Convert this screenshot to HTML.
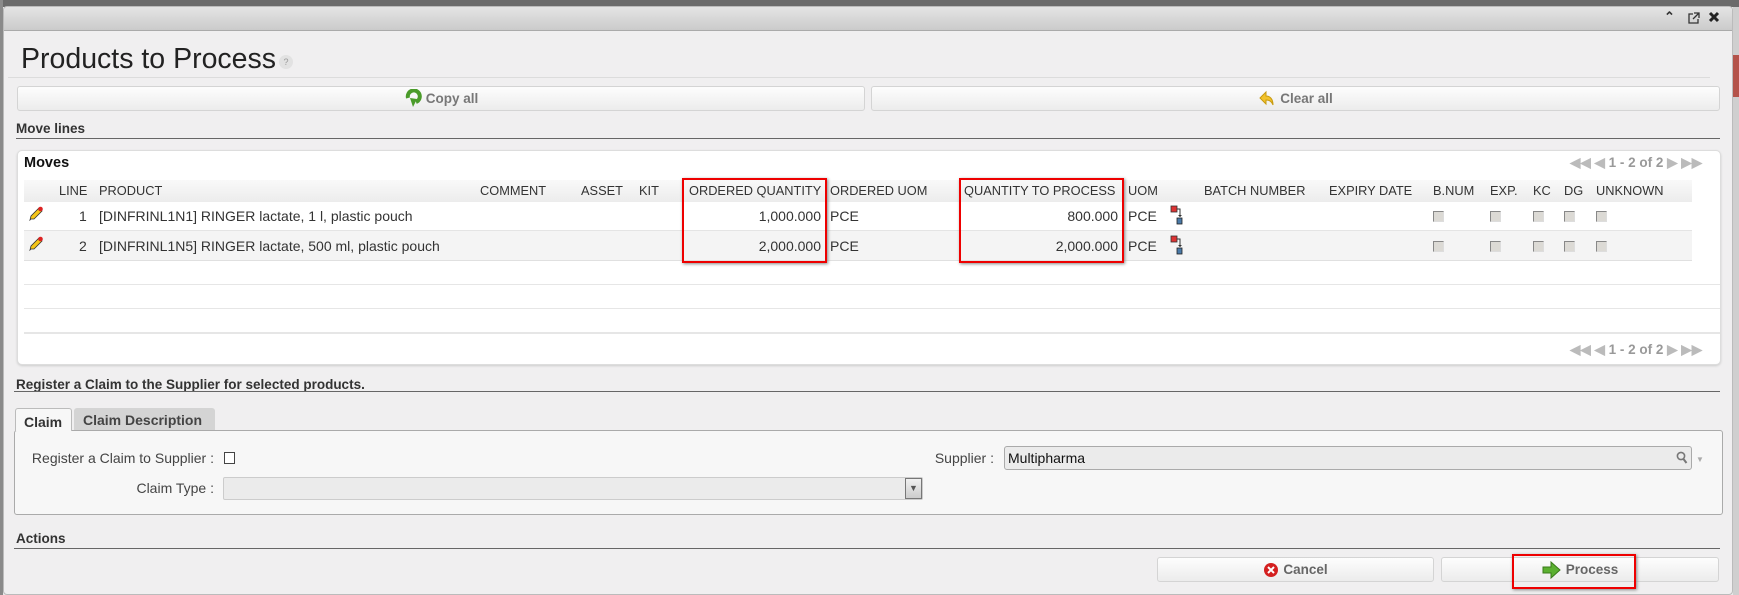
<!DOCTYPE html>
<html><head><meta charset="utf-8"><style>
*{box-sizing:border-box;margin:0;padding:0}
body{width:1739px;height:595px;position:relative;overflow:hidden;background:#e9e9e9;font-family:"Liberation Sans",Arial,sans-serif;font-size:14px;color:#333}
.a{position:absolute}
.btn{position:absolute;border:1px solid #d4d4d4;border-radius:3px;background:linear-gradient(#fdfdfd,#ececec);color:#777;font-weight:bold;font-size:13.5px;text-align:center;display:flex;align-items:center;justify-content:center;gap:4px}
.hd{position:absolute;top:180px;height:22px;line-height:22px;font-size:12.8px;color:#333;white-space:nowrap}
.cb{position:absolute;width:11px;height:11px;border:1px solid #888;border-right-color:#ddd;border-bottom-color:#ddd;background:#dcdad5}
.sec{position:absolute;left:16px;font-weight:bold;font-size:13.5px;color:#333}
.line{position:absolute;height:1px;background:#666}
</style></head><body>
<div class="a" style="left:0;top:0;width:1739px;height:7px;background:#6b6b6b"></div>
<div class="a" style="left:0;top:0;width:3px;height:595px;background:#8a8a8a"></div>
<div class="a" style="left:1733px;top:7px;width:6px;height:588px;background:#cfcfcf"></div>
<div class="a" style="left:1733px;top:55px;width:6px;height:42px;background:#b4534a"></div>
<!-- dialog -->
<div class="a" style="left:3px;top:6px;width:1730px;height:589px;background:#f0eff0;border:1px solid #bbb;border-radius:4px"></div>
<div class="a" style="left:4px;top:7px;width:1728px;height:24px;background:linear-gradient(#e4e4e4,#cbcbcb);border-bottom:1px solid #aaa;border-radius:4px 4px 0 0"></div>
<div class="a" style="left:1664px;top:9px;font-size:13px;font-weight:bold;color:#333">&#8963;</div>
<svg class="a" style="left:1688px;top:12px" width="12" height="12" viewBox="0 0 12 12"><path d="M5 2H1v9h9V7" fill="none" stroke="#333" stroke-width="1.3"/><path d="M6 1h5v5M11 1L5 7" fill="none" stroke="#333" stroke-width="1.3"/></svg>
<svg class="a" style="left:1708px;top:11px" width="12" height="12" viewBox="0 0 12 12"><path d="M2 2l8 8M10 2l-8 8" stroke="#222" stroke-width="3"/></svg>
<div class="a" style="left:21px;top:43px;font-size:28.5px;color:#222">Products to Process</div>
<div class="a" style="left:279px;top:55px;width:14px;height:14px;border-radius:7px;background:#e2e2e2;color:#999;font-size:9px;text-align:center;line-height:14px">?</div>
<div class="a" style="left:8px;top:77px;width:1702px;height:1px;background:#dcdcdc"></div>
<div class="btn" style="left:17px;top:86px;width:848px;height:25px"><svg width="18" height="20" viewBox="0 0 18 20"><path d="M4 9a6 6 0 1 1 8 4" fill="none" stroke="#4a9b2a" stroke-width="4"/><path d="M6 9l3 9 4-8z" fill="#4a9b2a"/></svg>Copy all</div>
<div class="btn" style="left:871px;top:86px;width:849px;height:25px"><svg width="18" height="20" viewBox="0 0 18 20"><path d="M8 3L2 9l6 6v-4c4 0 6 2 7 5 0-6-3-9-7-9z" fill="#f2c22a" stroke="#c79a10"/></svg>Clear all</div>
<div class="sec" style="top:121px">Move lines</div>
<div class="line" style="left:16px;top:138px;width:1704px"></div>
<!-- moves panel -->
<div class="a" style="left:17px;top:150px;width:1704px;height:215px;background:#fff;border:1px solid #ddd;border-radius:5px;box-shadow:0 1px 2px #ccc"></div>
<div class="a" style="left:24px;top:155px;font-weight:bold;font-size:14.5px;color:#111">Moves</div>
<div class="a" style="left:1570px;top:155px;color:#bbb;font-size:13.5px;font-weight:bold">&#9664;&#9664; &#9664; <span style="color:#999">1 - 2 of 2</span> &#9654; &#9654;&#9654;</div>
<div class="a" style="left:24px;top:180px;width:1668px;height:22px;background:linear-gradient(#f9f9f9,#ececec)"></div>
<div class="hd" style="left:59px">LINE</div><div class="hd" style="left:99px">PRODUCT</div><div class="hd" style="left:480px">COMMENT</div><div class="hd" style="left:581px">ASSET</div><div class="hd" style="left:639px">KIT</div><div class="hd" style="left:689px">ORDERED QUANTITY</div><div class="hd" style="left:830px">ORDERED UOM</div><div class="hd" style="left:964px">QUANTITY TO PROCESS</div><div class="hd" style="left:1128px">UOM</div><div class="hd" style="left:1204px">BATCH NUMBER</div><div class="hd" style="left:1329px">EXPIRY DATE</div><div class="hd" style="left:1433px">B.NUM</div><div class="hd" style="left:1490px">EXP.</div><div class="hd" style="left:1533px">KC</div><div class="hd" style="left:1564px">DG</div><div class="hd" style="left:1596px">UNKNOWN</div>
<div class="a" style="left:24px;top:202px;width:1668px;height:29px;border-bottom:1px solid #e4e4e4"></div>
<div class="a" style="left:24px;top:231px;width:1668px;height:30px;background:#f4f4f4;border-bottom:1px solid #e0e0e0"></div>
<div class="a" style="left:24px;top:284px;width:1696px;height:1px;background:#e6e6e6"></div>
<div class="a" style="left:24px;top:308px;width:1696px;height:1px;background:#e6e6e6"></div>
<div class="a" style="left:24px;top:332px;width:1696px;height:2px;background:#e6e6e6"></div>
<div class="a" style="left:1570px;top:342px;color:#bbb;font-size:13.5px;font-weight:bold">&#9664;&#9664; &#9664; <span style="color:#999">1 - 2 of 2</span> &#9654; &#9654;&#9654;</div>
<!-- rows -->
<svg class="a" style="left:28px;top:205px" width="16" height="16" viewBox="0 0 16 16"><path d="M3 14l-1 1 1-4 8-8 3 3-8 8z" fill="#f5c518" stroke="#333" stroke-width=".8"/><circle cx="12.5" cy="4" r="2.3" fill="#d22"/></svg>
<svg class="a" style="left:28px;top:235px" width="16" height="16" viewBox="0 0 16 16"><path d="M3 14l-1 1 1-4 8-8 3 3-8 8z" fill="#f5c518" stroke="#333" stroke-width=".8"/><circle cx="12.5" cy="4" r="2.3" fill="#d22"/></svg>
<div class="a" style="left:79px;top:208px">1</div><div class="a" style="left:99px;top:208px">[DINFRINL1N1] RINGER lactate, 1 l, plastic pouch</div>
<div class="a" style="left:79px;top:238px">2</div><div class="a" style="left:99px;top:238px">[DINFRINL1N5] RINGER lactate, 500 ml, plastic pouch</div>
<div class="a" style="left:720px;top:208px;width:101px;text-align:right">1,000.000</div><div class="a" style="left:830px;top:208px">PCE</div>
<div class="a" style="left:720px;top:238px;width:101px;text-align:right">2,000.000</div><div class="a" style="left:830px;top:238px">PCE</div>
<div class="a" style="left:990px;top:208px;width:128px;text-align:right">800.000</div><div class="a" style="left:1128px;top:208px">PCE</div>
<div class="a" style="left:990px;top:238px;width:128px;text-align:right">2,000.000</div><div class="a" style="left:1128px;top:238px">PCE</div>
<svg class="a" style="left:1170px;top:205px" width="14" height="20" viewBox="0 0 14 20"><rect x="1" y="1" width="6" height="6" fill="#d33" stroke="#333" stroke-width=".8"/><path d="M7 4h3v8" fill="none" stroke="#333"/><path d="M8 10h4l-2 2z" fill="#333"/><rect x="7" y="13" width="5" height="6" fill="#4a7aa8" stroke="#222" stroke-width=".8"/></svg>
<svg class="a" style="left:1170px;top:235px" width="14" height="20" viewBox="0 0 14 20"><rect x="1" y="1" width="6" height="6" fill="#d33" stroke="#333" stroke-width=".8"/><path d="M7 4h3v8" fill="none" stroke="#333"/><path d="M8 10h4l-2 2z" fill="#333"/><rect x="7" y="13" width="5" height="6" fill="#4a7aa8" stroke="#222" stroke-width=".8"/></svg>
<div class="cb" style="left:1433px;top:211px"></div><div class="cb" style="left:1490px;top:211px"></div><div class="cb" style="left:1533px;top:211px"></div><div class="cb" style="left:1564px;top:211px"></div><div class="cb" style="left:1596px;top:211px"></div>
<div class="cb" style="left:1433px;top:241px"></div><div class="cb" style="left:1490px;top:241px"></div><div class="cb" style="left:1533px;top:241px"></div><div class="cb" style="left:1564px;top:241px"></div><div class="cb" style="left:1596px;top:241px"></div>
<div class="a" style="left:682px;top:178px;width:145px;height:85px;border:2px solid #e00;box-shadow:1px 1px 3px #888"></div>
<div class="a" style="left:959px;top:178px;width:165px;height:85px;border:2px solid #e00;box-shadow:1px 1px 3px #888"></div>
<!-- claim -->
<div class="sec" style="top:377px">Register a Claim to the Supplier for selected products.</div>
<div class="line" style="left:14px;top:391px;width:1706px"></div>
<div class="a" style="left:14px;top:430px;width:1709px;height:85px;background:#f7f7f7;border:1px solid #aaa;border-radius:3px"></div>
<div class="a" style="left:15px;top:408px;width:57px;height:23px;background:#f7f7f7;border:1px solid #bbb;border-bottom:none;border-radius:3px 3px 0 0;font-weight:bold;padding:5px 0 0 8px">Claim</div>
<div class="a" style="left:74px;top:408px;width:141px;height:22px;background:#d4d4d4;border-radius:3px 3px 0 0;font-weight:bold;padding:4px 0 0 9px;color:#444">Claim Description</div>
<div class="a" style="left:10px;top:450px;width:204px;text-align:right;color:#444">Register a Claim to Supplier :</div>
<div class="a" style="left:224px;top:452px;width:11px;height:12px;border:1px solid #444;background:#fff"></div>
<div class="a" style="left:10px;top:480px;width:204px;text-align:right;color:#444">Claim Type :</div>
<div class="a" style="left:223px;top:477px;width:700px;height:23px;background:#ebebeb;border:1px solid #ccc;border-radius:2px"></div>
<div class="a" style="left:905px;top:478px;width:17px;height:21px;background:linear-gradient(#f0f0f0,#ccc);border:1px solid #777;font-size:9px;color:#555;text-align:center;line-height:19px">&#9660;</div>
<div class="a" style="left:890px;top:450px;width:104px;text-align:right;color:#444">Supplier :</div>
<div class="a" style="left:1004px;top:446px;width:688px;height:24px;background:#ebebeb;border:1px solid #aaa;border-radius:3px;padding:3px 3px;color:#111">Multipharma</div>
<svg class="a" style="left:1676px;top:451px" width="12" height="13" viewBox="0 0 12 13"><circle cx="5" cy="5" r="3.6" fill="none" stroke="#777" stroke-width="1.6"/><path d="M7.5 8l3 4" stroke="#777" stroke-width="2"/></svg>
<div class="a" style="left:1696px;top:455px;font-size:8px;color:#aaa">&#9660;</div>
<!-- actions -->
<div class="sec" style="top:531px">Actions</div>
<div class="line" style="left:14px;top:548px;width:1706px"></div>
<div class="btn" style="left:1157px;top:557px;width:277px;height:25px;color:#666"><svg width="16" height="16" viewBox="0 0 16 16"><circle cx="8" cy="8" r="7" fill="#d42020"/><path d="M5 5l6 6M11 5l-6 6" stroke="#fff" stroke-width="2"/></svg>Cancel</div>
<div class="btn" style="left:1441px;top:557px;width:278px;height:25px;color:#666"><svg width="20" height="18" viewBox="0 0 20 18"><path d="M1 6h8V1l9 8-9 8v-5H1z" fill="#5bb030" stroke="#3a7a1a"/></svg>Process</div>
<div class="a" style="left:1512px;top:554px;width:124px;height:35px;border:2px solid #e00;box-shadow:1px 1px 3px #888"></div>
</body></html>
